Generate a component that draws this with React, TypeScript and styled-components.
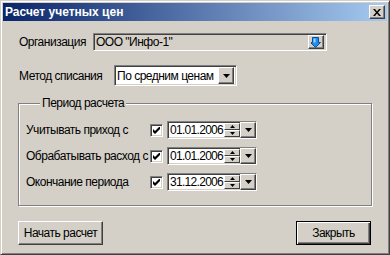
import React from "react"
import styled, { createGlobalStyle } from "styled-components"

const GlobalStyle = createGlobalStyle`
  html, body {
    margin: 0;
    padding: 0;
    background: #d4d0c8;
  }
  * {
    box-sizing: border-box;
  }
`

const Window = styled.div`
  width: 390px;
  height: 255px;
  background: #d4d0c8;
  border: 1px solid;
  border-color: #d4d0c8 #404040 #404040 #d4d0c8;
  box-shadow: inset 1px 1px #fff, inset -1px -1px #808080;
  padding: 2px;
  display: flex;
  flex-direction: column;
  font-family: "Liberation Sans", Arial, sans-serif;
  font-size: 12px;
  letter-spacing: -0.5px;
  color: #000;
`

const TitleBar = styled.div`
  height: 18px;
  display: flex;
  align-items: center;
  justify-content: space-between;
  padding: 0 2px 0 2px;
  background: linear-gradient(to right, #0a246a, #a6caf0);
`

const TitleText = styled.span`
  font-family: "Liberation Sans", Arial, sans-serif;
  font-weight: bold;
  font-size: 12px;
  letter-spacing: 0;
  color: #fff;
`

const Raised = styled.div<{ $w: number; $h: number }>`
  width: ${({ $w }) => $w}px;
  height: ${({ $h }) => $h}px;
  background: #d4d0c8;
  border: 1px solid;
  border-color: #fff #404040 #404040 #fff;
  box-shadow: inset -1px -1px #808080;
  display: flex;
  align-items: center;
  justify-content: center;
  flex-shrink: 0;
`

const Body = styled.div`
  flex: 1;
  display: flex;
  flex-direction: column;
  padding: 12px 15px 0 15px;
`

const FieldRow = styled.div<{ $h: number; $mt: number }>`
  display: flex;
  align-items: center;
  height: ${({ $h }) => $h}px;
  margin-top: ${({ $mt }) => $mt}px;
`

const Label = styled.span<{ $w: number }>`
  width: ${({ $w }) => $w}px;
  flex-shrink: 0;
  white-space: nowrap;
  padding-left: 1px;
`

const Sunken = styled.div<{ $w: number; $h: number; $bg?: string; $pad?: string }>`
  width: ${({ $w }) => $w}px;
  height: ${({ $h }) => $h}px;
  background: ${({ $bg }) => $bg || "#fff"};
  border: 1px solid;
  border-color: #808080 #fff #fff #808080;
  box-shadow: inset 1px 1px #404040, inset -1px -1px #d4d0c8;
  display: flex;
  align-items: center;
  padding: ${({ $pad }) => $pad || "2px"};
  flex-shrink: 0;
`

const FieldText = styled.span<{ $tight?: boolean }>`
  flex: 1;
  min-width: 0;
  white-space: nowrap;
  overflow: hidden;
  letter-spacing: ${({ $tight }) => ($tight ? "-0.7px" : "inherit")};
  padding-left: ${({ $tight }) => ($tight ? "1px" : "0")};
`

const Group = styled.div`
  position: relative;
  margin-top: 17px;
  height: 103px;
  border: 1px solid #808080;
  box-shadow: inset 1px 1px #fff, 1px 1px #fff;
  display: flex;
  flex-direction: column;
  gap: 8px;
  padding: 17px 0 0 6px;
`

const Legend = styled.span`
  position: absolute;
  top: -8px;
  left: 21px;
  padding: 0 2px;
  background: #d4d0c8;
  line-height: 15px;
`

const DateRow = styled.div`
  display: flex;
  align-items: center;
  height: 18px;
`

const Check = styled.div`
  width: 13px;
  height: 13px;
  background: #fff;
  border: 1px solid;
  border-color: #808080 #fff #fff #808080;
  box-shadow: inset 1px 1px #404040, inset -1px -1px #d4d0c8;
  display: flex;
  align-items: center;
  justify-content: center;
  margin-right: 4px;
  flex-shrink: 0;
`

const SpinCol = styled.div`
  display: flex;
  flex-direction: column;
  height: 100%;
  margin-left: auto;
  flex-shrink: 0;
`

const SpinHalf = styled.div`
  flex: 1;
  width: 16px;
  background: #d4d0c8;
  border: 1px solid;
  border-color: #fff #404040 #404040 #fff;
  display: flex;
  align-items: center;
  justify-content: center;
`

const Buttons = styled.div`
  display: flex;
  justify-content: space-between;
  margin-top: 15px;
  padding-right: 1px;
`

const Button = styled.div<{ $w: number; $default?: boolean }>`
  width: ${({ $w }) => $w}px;
  height: 24px;
  background: #d4d0c8;
  display: flex;
  align-items: center;
  justify-content: center;
  white-space: nowrap;
  border: 1px solid;
  border-color: ${({ $default }) =>
    $default ? "#000" : "#fff #404040 #404040 #fff"};
  box-shadow: ${({ $default }) =>
    $default
      ? "inset 1px 1px #fff, inset -1px -1px #404040, inset -2px -2px #808080"
      : "inset -1px -1px #808080"};
`

const DownTriangle = () => (
  <svg width="7" height="4" viewBox="0 0 7 4">
    <path d="M0 0h7L3.5 4z" fill="#000" />
  </svg>
)

const SmallArrow = ({ up }: { up?: boolean }) => (
  <svg width="5" height="3" viewBox="0 0 5 3">
    <path d={up ? "M2.5 0L5 3H0z" : "M0 0h5L2.5 3z"} fill="#000" />
  </svg>
)

const CheckMark = () => (
  <svg width="7" height="7" viewBox="0 0 7 7">
    <path d="M0 2v3l2 2 5-5V-1L2 4z" fill="#000" />
  </svg>
)

const LookupIcon = () => (
  <svg width="10" height="11" viewBox="0 0 10 11">
    <path d="M1.5 0.5h6v5h2l-5 5-5-5h2z" fill="#1f8ee6" stroke="#0a4aa0" strokeWidth="1" />
    <path d="M2.5 1.5h2v4h-2z" fill="#9fd4ff" />
  </svg>
)

const CloseX = () => (
  <svg width="8" height="7" viewBox="0 0 8 7">
    <path d="M0 0h2l2 2.5L6 0h2L5 3.5 8 7H6L4 4.5 2 7H0l3-3.5z" fill="#000" />
  </svg>
)

const DateField = ({ value }: { value: string }) => (
  <Sunken $w={90} $h={18} $pad="1px 0 1px 1px">
    <FieldText $tight>{value}</FieldText>
    <SpinCol>
      <SpinHalf>
        <SmallArrow up />
      </SpinHalf>
      <SpinHalf>
        <SmallArrow />
      </SpinHalf>
    </SpinCol>
    <Raised $w={16} $h={16}>
      <DownTriangle />
    </Raised>
  </Sunken>
)

const periods = [
  { label: "Учитывать приход с", value: "01.01.2006" },
  { label: "Обрабатывать расход с", value: "01.01.2006" },
  { label: "Окончание периода", value: "31.12.2006" },
]

export default function App() {
  return (
    <>
      <GlobalStyle />
      <Window>
        <TitleBar>
          <TitleText>Расчет учетных цен</TitleText>
          <Raised $w={16} $h={14}>
            <CloseX />
          </Raised>
        </TitleBar>
        <Body>
          <FieldRow $h={18} $mt={0}>
            <Label $w={75}>Организация</Label>
            <Sunken $w={234} $h={18} $bg="#d4d0c8">
              <FieldText>ООО "Инфо-1"</FieldText>
              <Raised $w={16} $h={14}>
                <LookupIcon />
              </Raised>
            </Sunken>
          </FieldRow>
          <FieldRow $h={21} $mt={14}>
            <Label $w={96}>Метод списания</Label>
            <Sunken $w={123} $h={21}>
              <FieldText>По средним ценам</FieldText>
              <Raised $w={16} $h={17}>
                <DownTriangle />
              </Raised>
            </Sunken>
          </FieldRow>
          <Group>
            <Legend>Период расчета</Legend>
            {periods.map((p) => (
              <DateRow key={p.label}>
                <Label $w={125}>{p.label}</Label>
                <Check>
                  <CheckMark />
                </Check>
                <DateField value={p.value} />
              </DateRow>
            ))}
          </Group>
          <Buttons>
            <Button $w={85}>Начать расчет</Button>
            <Button $w={75} $default>
              Закрыть
            </Button>
          </Buttons>
        </Body>
      </Window>
    </>
  )
}
